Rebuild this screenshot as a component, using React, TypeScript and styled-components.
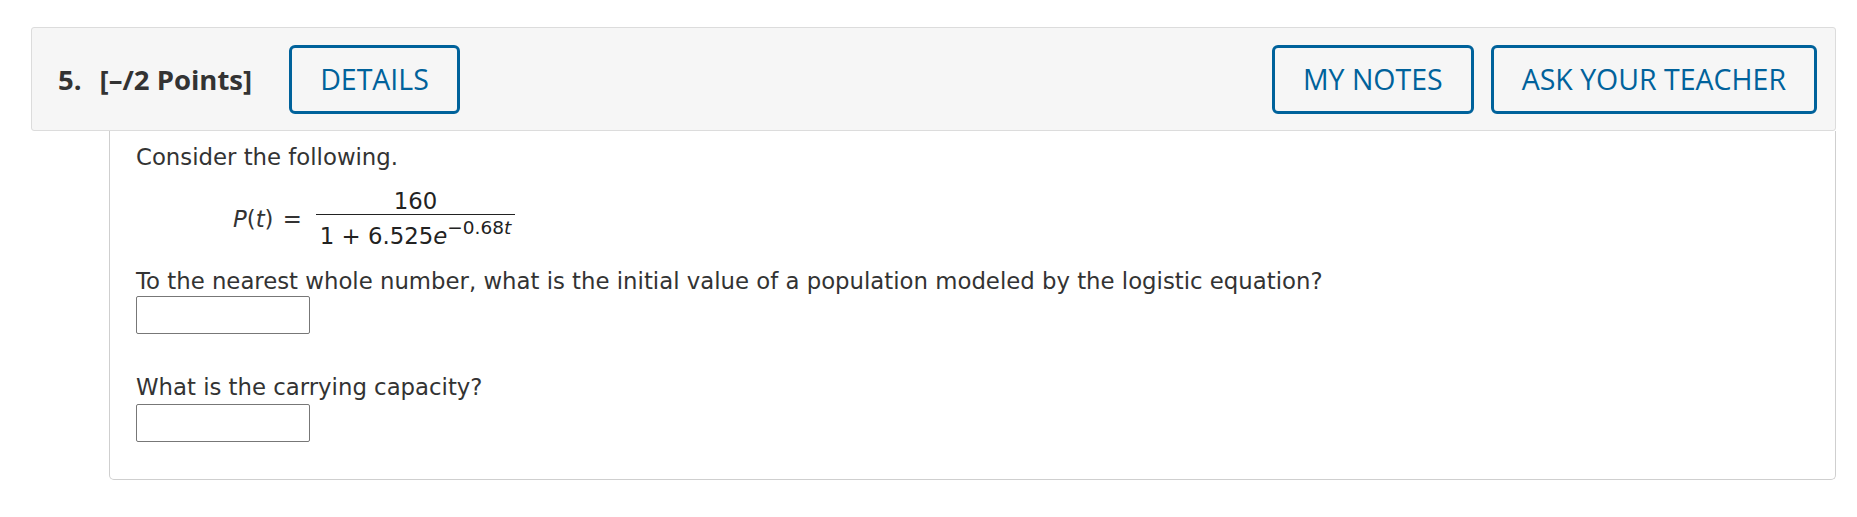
import React from "react";
import styled, { createGlobalStyle } from "styled-components";

const Global = createGlobalStyle`
  html, body { margin: 0; padding: 0; background: #ffffff; }
  body { font-family: "DejaVu Sans", Verdana, sans-serif; color: #333; }
`;

const Page = styled.div`
  padding: 27px 21px 0 31px;
`;

const Header = styled.div`
  display: flex;
  align-items: center;
  height: 104px;
  box-sizing: border-box;
  padding: 0 18px 0 26px;
  background: #f6f6f6;
  border: 1px solid #dcdcdc;
  border-radius: 3px;
`;

const HeadText = styled.span<{ $gap: number }>`
  font-family: "Open Sans", sans-serif;
  font-weight: 700;
  font-size: 27.5px;
  color: #333;
  margin-right: ${(p) => p.$gap}px;
`;

const Spacer = styled.div`
  flex: 1;
`;

const Button = styled.button<{ $gap?: number }>`
  height: 69px;
  box-sizing: border-box;
  padding: 0 28px;
  margin-left: ${(p) => p.$gap ?? 0}px;
  background: transparent;
  border: 3px solid #00629b;
  border-radius: 6px;
  color: #00629b;
  font-family: "Open Sans", sans-serif;
  font-size: 28.5px;
  font-weight: 500;
  cursor: pointer;
`;

const Body = styled.div`
  margin-left: 78px;
  border: 1px solid #cfcfcf;
  border-top: none;
  border-radius: 0 0 5px 5px;
  padding: 12px 26px 37px 26px;
  font-size: 22.8px;
  color: #333;
`;

const Para = styled.p<{ $mt?: number }>`
  margin: ${(p) => p.$mt ?? 0}px 0 0 0;
  line-height: 28px;
`;

const Equation = styled.div`
  display: flex;
  align-items: center;
  margin: 17px 0 0 97px;
  color: #222;
`;

const Italic = styled.i`
  font-style: italic;
`;

const Lhs = styled.span`
  margin-right: 14px;
  color: #333;
  word-spacing: 2px;
`;

const Fraction = styled.span`
  display: inline-flex;
  flex-direction: column;
  align-items: stretch;
  text-align: center;
`;

const Num = styled.span`
  padding: 0 4px 0;
  border-bottom: 1.5px solid #222;
  line-height: 26px;
`;

const Den = styled.span`
  padding: 8px 4px 0;
  line-height: 26px;
`;

const Sup = styled.sup`
  font-size: 18.5px;
  vertical-align: 10px;
  line-height: 0;
`;

const Input = styled.input<{ $mt?: number }>`
  display: block;
  width: 174px;
  height: 38px;
  box-sizing: border-box;
  margin-top: ${(p) => p.$mt ?? 1}px;
  border: 1px solid #777;
  border-radius: 2px;
  font-size: 18px;
`;

export default function App() {
  return (
    <>
      <Global />
      <Page>
        <Header>
          <HeadText $gap={18}>5.</HeadText>
          <HeadText $gap={37}>[–/2 Points]</HeadText>
          <Button>DETAILS</Button>
          <Spacer />
          <Button>MY NOTES</Button>
          <Button $gap={17}>ASK YOUR TEACHER</Button>
        </Header>
        <Body>
          <Para>Consider the following.</Para>
          <Equation>
            <Lhs>
              <Italic>P</Italic>(<Italic>t</Italic>) =
            </Lhs>
            <Fraction>
              <Num>160</Num>
              <Den>
                1 + 6.525<Italic>e</Italic>
                <Sup>
                  −0.68<Italic>t</Italic>
                </Sup>
              </Den>
            </Fraction>
          </Equation>
          <Para $mt={18}>
            To the nearest whole number, what is the initial value of a population modeled by the logistic equation?
          </Para>
          <Input type="text" />
          <Para $mt={39}>What is the carrying capacity?</Para>
          <Input type="text" $mt={3} />
        </Body>
      </Page>
    </>
  );
}
